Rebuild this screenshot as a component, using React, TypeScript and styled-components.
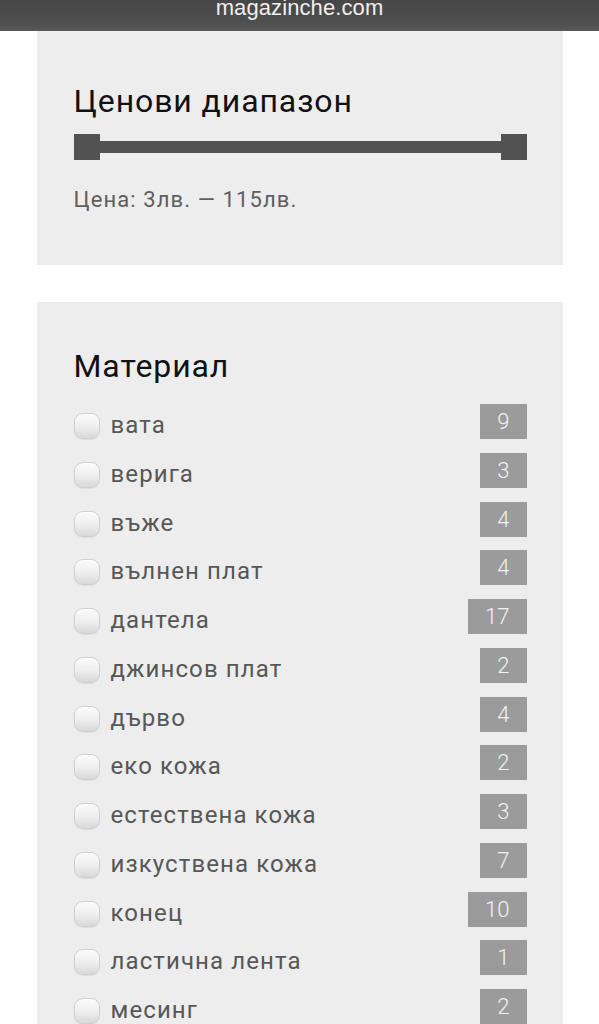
import React from "react";
import styled, { createGlobalStyle } from "styled-components";

const GlobalStyle = createGlobalStyle`
  html, body {
    margin: 0;
    padding: 0;
    background: #ffffff;
    font-family: Roboto, "Noto Sans", "DejaVu Sans", sans-serif;
  }
  * { box-sizing: border-box; }
`;

const Page = styled.div`
  display: flex;
  flex-direction: column;
  align-items: center;
  width: 599px;
`;

const TopBar = styled.header`
  width: 100%;
  height: 31px;
  display: flex;
  justify-content: center;
  align-items: flex-start;
  background: linear-gradient(180deg, #474747 0%, #4e4e4e 70%, #575757 100%);
  overflow: hidden;
`;

const SiteName = styled.div`
  font-family: "Liberation Sans", Arial, sans-serif;
  font-size: 22px;
  line-height: 16px;
  color: #efefef;
  letter-spacing: 0.1px;
`;

const Panel = styled.section<{ $top: number; $bottom: number; $gap?: number }>`
  width: 526px;
  background: #ededed;
  padding: ${(p) => p.$top}px 36px ${(p) => p.$bottom}px 37px;
  margin-top: ${(p) => p.$gap ?? 0}px;
  display: flex;
  flex-direction: column;
`;

const Title = styled.h2`
  margin: 0;
  font-size: 32px;
  line-height: 38px;
  font-weight: 400;
  letter-spacing: 0.9px;
  color: #111111;
`;

const Slider = styled.div`
  margin-top: 14px;
  height: 26px;
  display: flex;
  align-items: center;
`;

const Handle = styled.div`
  width: 26px;
  height: 26px;
  background: #525252;
  flex: none;
`;

const Track = styled.div`
  flex: 1;
  height: 12px;
  background: #525252;
`;

const PriceText = styled.div`
  margin-top: 27px;
  font-size: 22px;
  line-height: 26px;
  letter-spacing: 1.1px;
  color: #5e5e5e;
`;

const List = styled.ul`
  list-style: none;
  margin: 19px 0 0 0;
  padding: 0;
  display: flex;
  flex-direction: column;
  gap: 13.75px;
`;

const Row = styled.li`
  height: 35px;
  display: flex;
  align-items: flex-start;
`;

const Check = styled.span`
  flex: none;
  width: 26px;
  height: 26px;
  margin-top: 9px;
  border-radius: 9px;
  border: 1px solid #cfcfcf;
  background: linear-gradient(180deg, #fbfbfb 0%, #efefef 50%, #d9d9d9 100%);
  box-shadow: inset 0 1px 1px rgba(255, 255, 255, 0.9), 0 1px 1px rgba(0, 0, 0, 0.06);
`;

const Label = styled.span`
  margin-left: 11px;
  margin-top: 7px;
  font-size: 24px;
  line-height: 28px;
  letter-spacing: 1.1px;
  color: #575757;
`;

const Count = styled.span`
  margin-left: auto;
  height: 35px;
  padding: 0 17px;
  background: #9b9b9b;
  color: #f2f2f2;
  font-size: 22px;
  font-weight: 300;
  line-height: 35px;
  text-align: center;
`;

const materials: [string, number][] = [
  ["вата", 9],
  ["верига", 3],
  ["въже", 4],
  ["вълнен плат", 4],
  ["дантела", 17],
  ["джинсов плат", 2],
  ["дърво", 4],
  ["еко кожа", 2],
  ["естествена кожа", 3],
  ["изкуствена кожа", 7],
  ["конец", 10],
  ["ластична лента", 1],
  ["месинг", 2],
];

export default function App() {
  return (
    <>
      <GlobalStyle />
      <Page>
        <TopBar>
          <SiteName>magazinche.com</SiteName>
        </TopBar>
        <Panel $top={51} $bottom={52}>
          <Title>Ценови диапазон</Title>
          <Slider>
            <Handle />
            <Track />
            <Handle />
          </Slider>
          <PriceText>Цена: 3лв. — 115лв.</PriceText>
        </Panel>
        <Panel $top={45} $bottom={40} $gap={37}>
          <Title>Материал</Title>
          <List>
            {materials.map(([name, count]) => (
              <Row key={name}>
                <Check />
                <Label>{name}</Label>
                <Count>{count}</Count>
              </Row>
            ))}
          </List>
        </Panel>
      </Page>
    </>
  );
}
